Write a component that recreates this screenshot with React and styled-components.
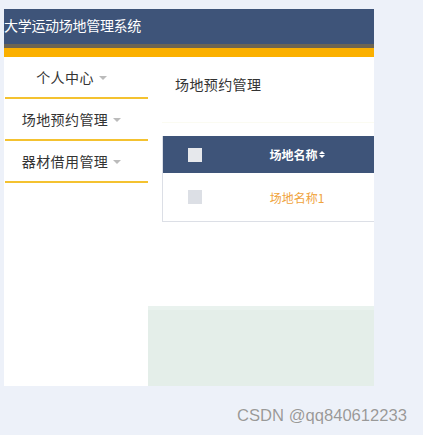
import React from 'react'
import styled, { createGlobalStyle } from 'styled-components'

const GlobalStyle = createGlobalStyle`
    html, body {
        margin: 0;
        padding: 0;
        background: #edf1f9;
        font-family: "Noto Sans CJK SC", "Noto Sans", sans-serif;
    }
`

const menus = ['个人中心', '场地预约管理', '器材借用管理']

const App = () => {
    return (
        <Page>
            <GlobalStyle />
            <Frame>
                <Header>大学运动场地管理系统</Header>
                <Stripe />
                <Body>
                    <Sidebar>
                        {menus.map((m) => (
                            <MenuItem key={m}>
                                {m}
                                <Caret />
                            </MenuItem>
                        ))}
                    </Sidebar>
                    <Main>
                        <Title>场地预约管理</Title>
                        <Table>
                            <HeadRow>
                                <CheckCell>
                                    <Box $head />
                                </CheckCell>
                                <NameCell $head>
                                    场地名称
                                    <Sort>
                                        <Arrow $up />
                                        <Arrow />
                                    </Sort>
                                </NameCell>
                            </HeadRow>
                            <Row>
                                <CheckCell>
                                    <Box />
                                </CheckCell>
                                <NameCell>场地名称1</NameCell>
                            </Row>
                        </Table>
                        <Spacer />
                        <Footer />
                    </Main>
                </Body>
            </Frame>
            <Mark>CSDN @qq840612233</Mark>
        </Page>
    )
}

export default App

const Page = styled.div`
    width: 423px;
    height: 435px;
    padding: 9px 0 0 4px;
    box-sizing: border-box;
    position: relative;
`
const Frame = styled.div`
    width: 370px;
    height: 377px;
    background: #fff;
    overflow: hidden;
    display: flex;
    flex-direction: column;
`
const Header = styled.div`
    height: 35px;
    background: #3e5479;
    color: #fff;
    font-size: 14px;
    line-height: 32px;
    letter-spacing: -0.3px;
    border-bottom: 4px solid #6d6552;
`
const Stripe = styled.div`
    height: 9px;
    background: #fbb000;
`
const Body = styled.div`
    flex: 1;
    display: flex;
`
const Sidebar = styled.div`
    width: 144px;
`
const MenuItem = styled.div`
    height: 40px;
    margin-left: 1px;
    border-bottom: 2px solid #f4c230;
    display: flex;
    align-items: center;
    justify-content: center;
    font-size: 14px;
    letter-spacing: 0.4px;
    color: #333;
    padding-right: 10px;
`
const Caret = styled.span`
    display: inline-block;
    margin-left: 5px;
    margin-top: 1px;
    border-left: 4px solid transparent;
    border-right: 4px solid transparent;
    border-top: 4px solid #bbb;
`
const Main = styled.div`
    flex: 1;
    display: flex;
    flex-direction: column;
    padding-left: 14px;
    min-width: 0;
`
const Title = styled.div`
    height: 66px;
    padding: 17px 0 0 13px;
    box-sizing: border-box;
    font-size: 14px;
    letter-spacing: 0.4px;
    color: #333;
    border-bottom: 1px solid #fbfbf2;
    margin-bottom: 13px;
`
const Table = styled.div`
    border-left: 1px solid #dcdfe6;
    border-bottom: 1px solid #dcdfe6;
    width: 230px;
`
const HeadRow = styled.div`
    height: 37px;
    background: #3e5479;
    display: flex;
    align-items: center;
`
const Row = styled.div`
    height: 48px;
    display: flex;
    align-items: center;
`
const CheckCell = styled.div`
    width: 63px;
    display: flex;
    justify-content: center;
`
const Box = styled.div`
    width: 14px;
    height: 14px;
    background: ${(p) => (p.$head ? '#e6e8ec' : '#dcdfe5')};
`
const NameCell = styled.div`
    width: 142px;
    display: flex;
    align-items: center;
    justify-content: center;
    font-size: 12px;
    color: ${(p) => (p.$head ? '#fff' : '#f0a33c')};
    font-weight: ${(p) => (p.$head ? 'bold' : 'normal')};
`
const Sort = styled.span`
    display: inline-flex;
    flex-direction: column;
    gap: 1px;
    margin-left: 1px;
`
const Arrow = styled.span`
    width: 0;
    height: 0;
    border-left: 3.5px solid transparent;
    border-right: 3.5px solid transparent;
    ${(p) => (p.$up ? 'border-bottom: 3.5px solid #fff;' : 'border-top: 3.5px solid #fff;')}
`
const Spacer = styled.div`
    flex: 1;
`
const Footer = styled.div`
    height: 76px;
    margin-left: -14px;
    background: #e4eee9;
    border-top: 4px solid #e9f2ee;
`
const Mark = styled.div`
    position: absolute;
    left: 237px;
    top: 406px;
    font-family: "Liberation Sans", Arial, sans-serif;
    font-size: 16.6px;
    color: #999;
    text-shadow: 0 0 1px #fff;
`
